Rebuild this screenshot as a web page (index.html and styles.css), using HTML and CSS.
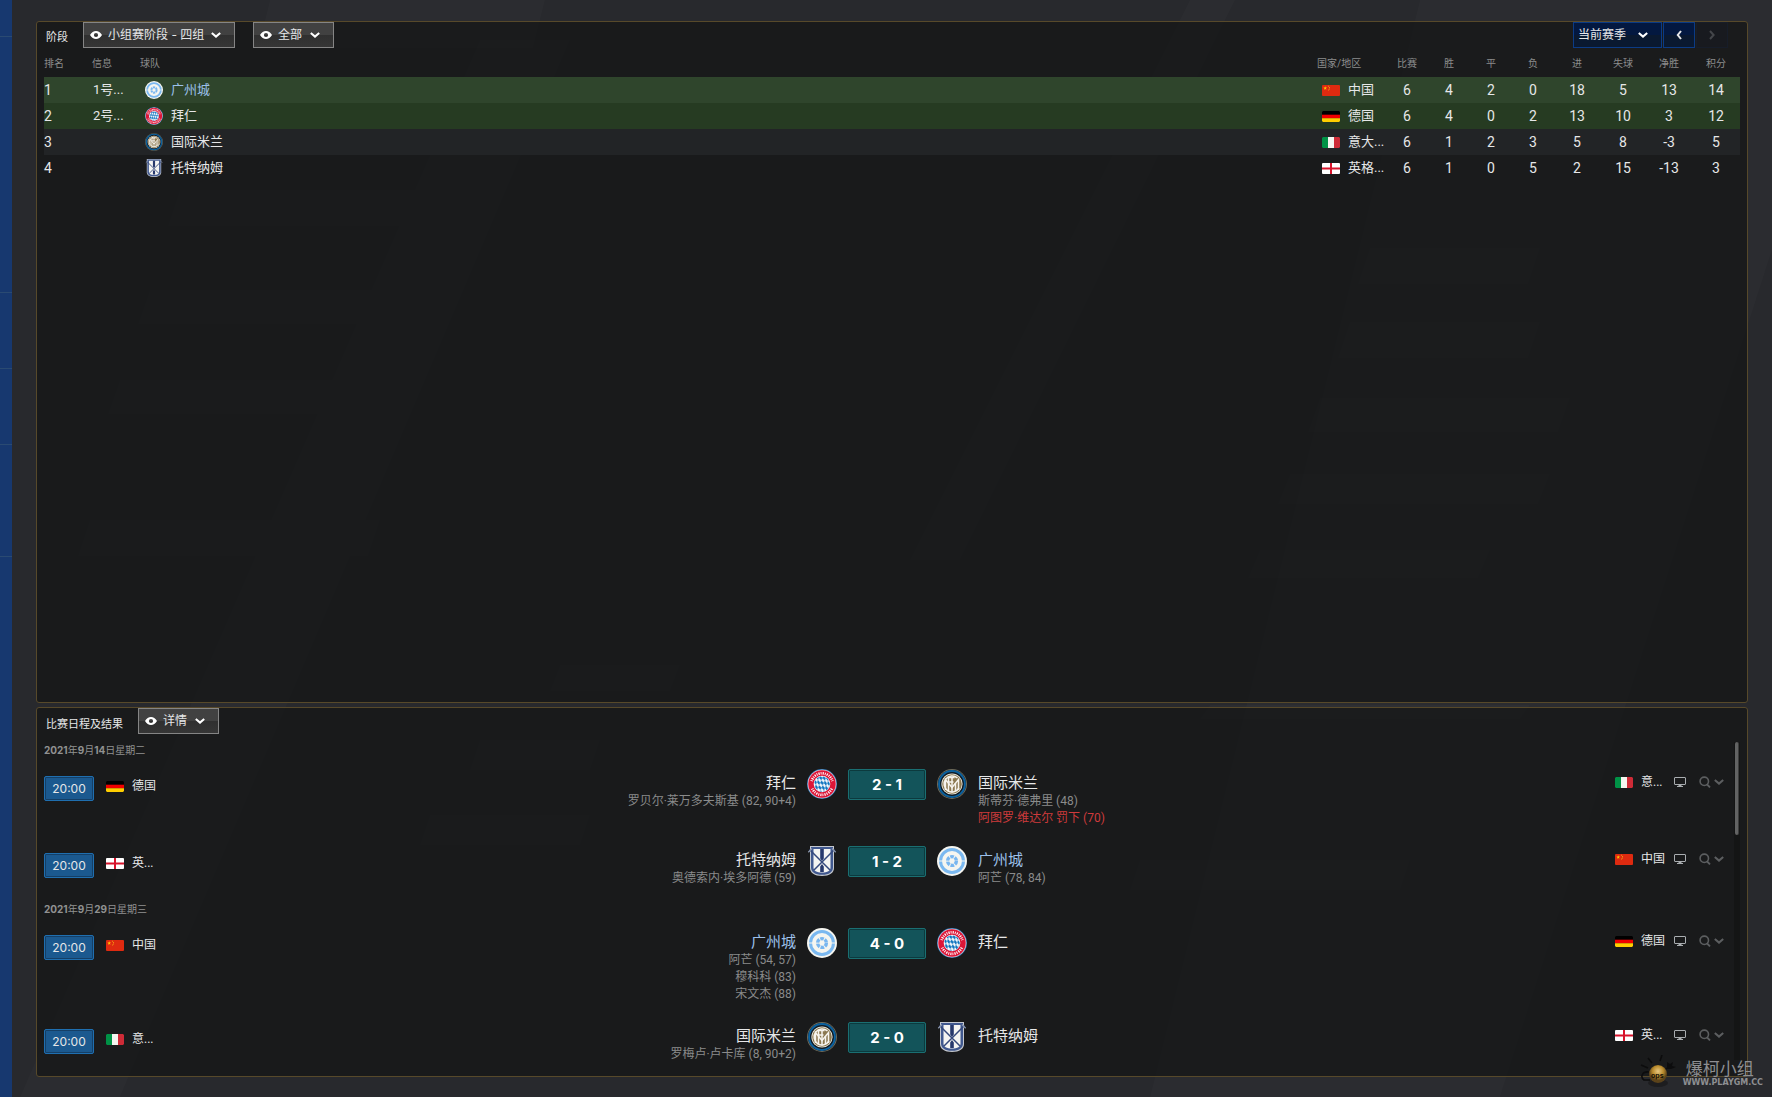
FILE: index.html
```
<!DOCTYPE html>
<html lang="zh-CN">

<head>
	<meta charset="UTF-8">
	<meta name="viewport" content="width=device-width, initial-scale=1.0">
	<title>小组赛阶段 - 四组</title>
	<link rel="stylesheet" href="styles.css">
</head>

<body>
	<!-- shared icons -->
	<svg class="sprite" aria-hidden="true">
		<defs>
			<pattern id="lozenge" width="3.200" height="5.200" patternUnits="userSpaceOnUse" patternTransform="rotate(-14) skewY(20)">
				<path fill="#0f74c0" d="M1.600 0l1.600 2.600-1.600 2.600L0 2.600z" />
			</pattern>
		</defs>
		<symbol id="eye" viewBox="0 0 12 8">
			<path fill="#fff" fill-rule="evenodd" d="M0 4C1.6 1.2 3.6 0 6 0s4.400 1.200 6 4c-1.600 2.800-3.600 4-6 4S1.600 6.800 0 4zM6 1.900a2.100 2.100 0 1 0 0 4.200a2.100 2.100 0 1 0 0-4.200z" />
		</symbol>
		<symbol id="down" viewBox="0 0 10 6">
			<path fill="none" stroke="currentColor" stroke-width="2" d="M.8 .9L5 4.600L9.200 .9" />
		</symbol>
		<symbol id="left" viewBox="0 0 6 10">
			<path fill="none" stroke="currentColor" stroke-width="2" d="M5 1L1.800 5L5 9" />
		</symbol>
		<symbol id="right" viewBox="0 0 6 10">
			<path fill="none" stroke="currentColor" stroke-width="2" d="M1 1L4.600 5L1 9" />
		</symbol>
		<symbol id="screen" viewBox="0 0 12 10">
			<rect x=".5" y=".5" width="11" height="7" rx=".5" fill="none" stroke="#a9adb0" />
			<path fill="#a9adb0" d="M4.500 8h3v1H9v1H3V9h1.500z" />
		</symbol>
		<symbol id="search" viewBox="0 0 12 12">
			<circle cx="5.300" cy="5.300" r="4.200" fill="none" stroke="#5c5e60" stroke-width="1.600" />
			<path d="M7.800 8.200L11 11.400" stroke="#5c5e60" stroke-width="1.900" />
		</symbol>

		<symbol id="cn" viewBox="0 0 18 11">
			<rect width="18" height="11" rx="1" fill="#de2a10" />
			<path fill="#ffc800" d="M3.200 1.200l.5 1.300h1.400l-1.100.8.4 1.400-1.200-.8-1.200.8.4-1.400-1.100-.8h1.400z" />
			<path fill="#f09010" d="M6 .8h1v1H6zM7 2h1v1H7zM7 3.500h1v1H7zM6 4.600h1v.8H6z" />
		</symbol>
		<symbol id="de" viewBox="0 0 18 11">
			<path fill="#000" d="M1 0h16l1 1v3H0V1z" />
			<path fill="#f00000" d="M0 3.700h18v3.600H0z" />
			<path fill="#ffce00" d="M0 7.300h18V10l-1 1H1l-1-1z" />
		</symbol>
		<symbol id="it" viewBox="0 0 18 11">
			<path fill="#009246" d="M1 0h5v11H1l-1-1V1z" />
			<path fill="#f4f5f0" d="M6 0h6v11H6z" />
			<path fill="#ce2b37" d="M12 0h5l1 1v9l-1 1h-5z" />
		</symbol>
		<symbol id="en" viewBox="0 0 18 11">
			<rect width="18" height="11" rx="1" fill="#fff" />
			<path fill="#d8142c" d="M8 0h2v4.500h8v2h-8V11H8V6.500H0v-2h8z" />
		</symbol>

		<symbol id="gz" viewBox="0 0 30 30">
			<circle cx="15" cy="15" r="15" fill="#f5f5f0" />
			<circle cx="15" cy="15" r="11.500" fill="none" stroke="#7ab8f0" stroke-width="3" />
			<path stroke="#f5f5f0" stroke-width="1.200" d="M1 15h4M25 15h4" />
			<circle cx="15" cy="15" r="4.400" fill="none" stroke="#78b6f0" stroke-width="3.400" stroke-dasharray="3.600 1.008" />
		</symbol>
		<symbol id="bay" viewBox="0 0 30 30">
			<circle cx="15" cy="15" r="15" fill="#3178b4" />
			<circle cx="15" cy="15" r="14.300" fill="#f1dfe3" />
			<circle cx="15" cy="15" r="13.700" fill="#dc1638" />
			<circle cx="15" cy="15" r="8.300" fill="#f4f8fb" />
			<circle cx="15" cy="15" r="7.800" fill="url(#lozenge)" />
			<!-- lettering round the ring, reduced to strokes -->
			<g fill="none" stroke="#fff" stroke-width="2.600" stroke-dasharray=".9 1.100 1.200 1">
				<path d="M4.600 12.200A10.800 10.800 0 0 1 25.400 12.200" />
				<path d="M5.200 19.600A10.800 10.800 0 0 0 24.800 19.600" />
			</g>
		</symbol>
		<symbol id="int" viewBox="0 0 30 30">
			<circle cx="15" cy="15" r="15" fill="#6d6a5a" />
			<circle cx="15" cy="15" r="14" fill="#0f1a22" />
			<circle cx="15" cy="15" r="12.900" fill="none" stroke="#0c62a0" stroke-width="2" />
			<circle cx="15" cy="15" r="10.600" fill="#f0eee6" />
			<circle cx="15" cy="15" r="9.800" fill="#8b7850" />
			<g fill="none" stroke="#f6f4ee" stroke-width="1.500">
				<path d="M8.500 21V10.500L15 18.500L21.500 10.500V21" />
				<path d="M11.500 23V8.500h6M11.500 13h5" />
				<path d="M20.500 9A8 8 0 1 0 22 19" />
				<path d="M15 8v15.500M18.500 14v8.500" />
			</g>
		</symbol>
		<symbol id="tot" viewBox="0 0 30 30">
			<path fill="#c4c8cf" d="M3 0h24v22c0 4.800-4.500 8-12 8S3 26.800 3 22z" />
			<path fill="#40588f" d="M4 1h22v20.500c0 4.500-4 7.300-11 7.300S4 26 4 21.500z" />
			<path fill="#f4f4f2" d="M6.500 3h17v18.500c0 3.300-3 5.100-8.500 5.100s-8.500-1.800-8.500-5.100z" />
			<path fill="#26386c" d="M13.200 3h3.600v9.500L15 15l-1.800-2.500zM13.200 20.500L15 18l1.800 2.500V26h-3.600z" />
			<path stroke="#34487c" stroke-width="1.500" d="M2.500 3.500L23 24M27.500 3.500L7 24" />
			<path stroke="#8c98b0" stroke-width="1.300" d="M1.300 6.200L5 2.500M28.700 6.200L25 2.500" />
		</symbol>
	</svg>

	<!-- faint slanted shapes behind the panels -->
	<svg class="backdrop" viewBox="0 0 1772 1097" preserveAspectRatio="none" aria-hidden="true">
		<path d="M270 0h275l-12 48H258zM1190 0h45L960 560h-50zM1420 0h352v250L1500 1097h-350z" />
		<path d="M480 40h90L120 1097H20zM180 190h300l-12 36H168zM150 290h290l-12 34H138zM120 380h260l-12 34H108zM90 520h290l-12 36H78z" />
		<path d="M1370 248h170l-12 36h-170zM1350 322h190l-12 36h-190zM1320 398h250l-12 34h-250zM1290 474h260l-12 30h-260zM1260 550h230l-12 28h-230z" />
		<path d="M560 665h120l-10 26H550zM480 740h120l-10 30H470zM430 815h160l-10 30H420zM1140 860h270l-10 30h-270zM1210 705h320l-10 14h-320z" />
	</svg>

	<div class="rail">
		<i></i><i></i><i></i><i></i><i></i>
	</div>

	<main class="content">
		<section class="panel stage">
			<div class="toolbar">
				<label for="stage" class="title">阶段</label>
				<div class="dropdown wide">
					<svg class="eye"><use href="#eye" /></svg>
					<select id="stage"><option>小组赛阶段 - 四组</option></select>
					<svg class="arrow"><use href="#down" /></svg>
				</div>
				<div class="dropdown">
					<svg class="eye"><use href="#eye" /></svg>
					<select aria-label="显示"><option>全部</option></select>
					<svg class="arrow"><use href="#down" /></svg>
				</div>
				<div class="season">
					<div class="dropdown blue">
						<select aria-label="赛季"><option>当前赛季</option></select>
						<svg class="arrow"><use href="#down" /></svg>
					</div>
					<button class="step" aria-label="上一赛季"><svg><use href="#left" /></svg></button>
					<button class="step" aria-label="下一赛季" disabled><svg><use href="#right" /></svg></button>
				</div>
			</div>

			<table class="standings">
				<colgroup>
					<col class="colRank"><col class="colRank"><col>
					<col class="colNation">
					<col class="colNum"><col class="colNum"><col class="colNum"><col class="colNum">
					<col class="colGoals"><col class="colGoals"><col class="colGoals"><col class="colPoints">
				</colgroup>
				<thead>
					<tr>
						<th>排名</th><th>信息</th><th>球队</th><th>国家/地区</th>
						<th class="num">比赛</th><th class="num">胜</th><th class="num">平</th><th class="num">负</th>
						<th class="num">进</th><th class="num">失球</th><th class="num">净胜</th><th class="num">积分</th>
					</tr>
				</thead>
				<tbody>
					<tr class="first">
						<td>1</td><td class="info">1号...</td>
						<td><div class="team own"><svg class="badge"><use href="#gz" /></svg>广州城</div></td>
						<td><div class="nation"><svg class="flag"><use href="#cn" /></svg>中国</div></td>
						<td class="num">6</td><td class="num">4</td><td class="num">2</td><td class="num">0</td>
						<td class="num">18</td><td class="num">5</td><td class="num">13</td><td class="num">14</td>
					</tr>
					<tr class="second">
						<td>2</td><td class="info">2号...</td>
						<td><div class="team"><svg class="badge"><use href="#bay" /></svg>拜仁</div></td>
						<td><div class="nation"><svg class="flag"><use href="#de" /></svg>德国</div></td>
						<td class="num">6</td><td class="num">4</td><td class="num">0</td><td class="num">2</td>
						<td class="num">13</td><td class="num">10</td><td class="num">3</td><td class="num">12</td>
					</tr>
					<tr class="odd">
						<td>3</td><td></td>
						<td><div class="team"><svg class="badge"><use href="#int" /></svg>国际米兰</div></td>
						<td><div class="nation"><svg class="flag"><use href="#it" /></svg>意大...</div></td>
						<td class="num">6</td><td class="num">1</td><td class="num">2</td><td class="num">3</td>
						<td class="num">5</td><td class="num">8</td><td class="num">-3</td><td class="num">5</td>
					</tr>
					<tr>
						<td>4</td><td></td>
						<td><div class="team"><svg class="badge"><use href="#tot" /></svg>托特纳姆</div></td>
						<td><div class="nation"><svg class="flag"><use href="#en" /></svg>英格...</div></td>
						<td class="num">6</td><td class="num">1</td><td class="num">0</td><td class="num">5</td>
						<td class="num">2</td><td class="num">15</td><td class="num">-13</td><td class="num">3</td>
					</tr>
				</tbody>
			</table>
		</section>

		<section class="panel fixtures">
			<div class="toolbar">
				<label for="view" class="title">比赛日程及结果</label>
				<div class="dropdown">
					<svg class="eye"><use href="#eye" /></svg>
					<select id="view"><option>详情</option></select>
					<svg class="arrow"><use href="#down" /></svg>
				</div>
			</div>

			<div class="scroller">
				<div class="list">
					<h2 class="date"><b>2021</b>年<b>9</b>月<b>14</b>日星期二</h2>
					<div class="match">
						<div class="venue">
							<button class="time">20:00</button>
							<svg class="flag"><use href="#de" /></svg><span>德国</span>
						</div>
						<div class="side home">
							<div class="name">拜仁</div>
							<div class="scorer">罗贝尔·莱万多夫斯基 (82, 90+4)</div>
						</div>
						<div class="result">
							<svg class="crest"><use href="#bay" /></svg>
							<button class="score">2 - 1</button>
							<svg class="crest"><use href="#int" /></svg>
						</div>
						<div class="side">
							<div class="name">国际米兰</div>
							<div class="scorer">斯蒂芬·德弗里 (48)</div>
							<div class="scorer red">阿图罗·维达尔 罚下 (70)</div>
						</div>
						<div class="tools">
							<svg class="flag"><use href="#it" /></svg><span>意...</span>
							<svg class="screen"><use href="#screen" /></svg>
							<button class="more" aria-label="更多"><svg class="search"><use href="#search" /></svg><svg class="arrow"><use href="#down" /></svg></button>
						</div>
					</div>
					<div class="match">
						<div class="venue">
							<button class="time">20:00</button>
							<svg class="flag"><use href="#en" /></svg><span>英...</span>
						</div>
						<div class="side home">
							<div class="name">托特纳姆</div>
							<div class="scorer">奥德索内·埃多阿德 (59)</div>
						</div>
						<div class="result">
							<svg class="crest"><use href="#tot" /></svg>
							<button class="score">1 - 2</button>
							<svg class="crest"><use href="#gz" /></svg>
						</div>
						<div class="side">
							<div class="name own">广州城</div>
							<div class="scorer">阿芒 (78, 84)</div>
						</div>
						<div class="tools">
							<svg class="flag"><use href="#cn" /></svg><span>中国</span>
							<svg class="screen"><use href="#screen" /></svg>
							<button class="more" aria-label="更多"><svg class="search"><use href="#search" /></svg><svg class="arrow"><use href="#down" /></svg></button>
						</div>
					</div>

					<h2 class="date"><b>2021</b>年<b>9</b>月<b>29</b>日星期三</h2>
					<div class="match">
						<div class="venue">
							<button class="time">20:00</button>
							<svg class="flag"><use href="#cn" /></svg><span>中国</span>
						</div>
						<div class="side home">
							<div class="name own">广州城</div>
							<div class="scorer">阿芒 (54, 57)</div>
							<div class="scorer">穆科科 (83)</div>
							<div class="scorer">宋文杰 (88)</div>
						</div>
						<div class="result">
							<svg class="crest"><use href="#gz" /></svg>
							<button class="score">4 - 0</button>
							<svg class="crest"><use href="#bay" /></svg>
						</div>
						<div class="side">
							<div class="name">拜仁</div>
						</div>
						<div class="tools">
							<svg class="flag"><use href="#de" /></svg><span>德国</span>
							<svg class="screen"><use href="#screen" /></svg>
							<button class="more" aria-label="更多"><svg class="search"><use href="#search" /></svg><svg class="arrow"><use href="#down" /></svg></button>
						</div>
					</div>
					<div class="match">
						<div class="venue">
							<button class="time">20:00</button>
							<svg class="flag"><use href="#it" /></svg><span>意...</span>
						</div>
						<div class="side home">
							<div class="name">国际米兰</div>
							<div class="scorer">罗梅卢·卢卡库 (8, 90+2)</div>
						</div>
						<div class="result">
							<svg class="crest"><use href="#int" /></svg>
							<button class="score">2 - 0</button>
							<svg class="crest"><use href="#tot" /></svg>
						</div>
						<div class="side">
							<div class="name">托特纳姆</div>
						</div>
						<div class="tools">
							<svg class="flag"><use href="#en" /></svg><span>英...</span>
							<svg class="screen"><use href="#screen" /></svg>
							<button class="more" aria-label="更多"><svg class="search"><use href="#search" /></svg><svg class="arrow"><use href="#down" /></svg></button>
						</div>
					</div>
				</div>
				<div class="track"><div class="thumb"></div></div>
			</div>
		</section>
	</main>

	<div class="watermark">
		<svg class="bomb" viewBox="0 0 36 34" aria-hidden="true">
			<defs>
				<radialGradient id="gold" cx=".5" cy=".35">
					<stop offset="0" stop-color="#e8c880" />
					<stop offset=".6" stop-color="#b88a2c" />
					<stop offset="1" stop-color="#5c431a" />
				</radialGradient>
			</defs>
			<path fill="none" stroke="#0c0c0d" stroke-width="1.600" d="M12 8L8 3M20 6L22 0M8 13L1 10M9 17C2 16 0 22 4 25h6M26 14l5-4" />
			<path fill="#0c0c0d" d="M27 7l3 2 3-2-1 4 4 1-5 2-4 0z" />
			<ellipse cx="18" cy="28" rx="10" ry="4" fill="#111" opacity=".5" />
			<circle cx="18" cy="19" r="9" fill="url(#gold)" />
			<text x="11" y="23">ops</text>
		</svg>
		<div class="mark">
			<div class="markName">爆柯小组</div>
			<div class="markSite">WWW.PLAYGM.CC</div>
		</div>
	</div>
</body>

</html>
```
FILE: styles.css
```
body {
	margin: 0;
	min-height: 100vh;
	display: flex;
	background-color: #28292d;
	color: #e6e7e8;
	font: 12px/16px Inter, "Noto Sans CJK SC", sans-serif;
}

select,
button {
	margin: 0;
	padding: 0;
	color: inherit;
	font: inherit;
	cursor: pointer;
}

svg {
	display: block;
	flex: none;
}

.sprite {
	position: absolute;
	width: 0;
	height: 0;
}

.backdrop {
	position: absolute;
	z-index: -1;
	width: 100%;
	height: 100%;
	fill: #fff;
	fill-opacity: 0.016;
}

/* edge of the collapsed side menu */
.rail {
	flex: 0 0 12px;
	background-color: #17386f;
}

.rail i {
	display: block;
	height: 75px;
	border-bottom: 1px solid #2a4a72;
}

.rail i:first-child {
	height: 36px;
}

.rail i:nth-child(2) {
	height: 255px;
}

.rail i:last-child {
	height: 111px;
}

.content {
	flex: 1;
	min-width: 0;
	display: flex;
	flex-direction: column;
	gap: 4px;
	padding: 21px 24px 20px;
}

.panel {
	padding: 0 7px;
	border: 1px solid #57492a;
	border-radius: 3px;
	background-color: rgba(17, 18, 19, 0.65);
}

.stage {
	flex: 1;
}

.toolbar {
	display: flex;
	align-items: flex-start;
	height: 29px;
}

.fixtures .toolbar {
	height: 31px;
}

.title {
	align-self: center;
	margin: 0 15px 0 2px;
	font-size: 11px;
}

.dropdown {
	position: relative;
	width: 81px;
	height: 26px;
	margin-right: 18px;
}

.dropdown.wide {
	width: 152px;
}

.dropdown select {
	width: 100%;
	height: 100%;
	padding: 0 0 1px 24px;
	appearance: none;
	border: 1px solid #858585;
	border-radius: 0;
	background: linear-gradient(#414141 50%, #303030 50%, #363636);
}

.dropdown .eye {
	position: absolute;
	top: 9px;
	left: 7px;
	width: 12px;
	height: 8px;
}

.arrow {
	width: 10px;
	height: 6px;
}

.dropdown .arrow {
	position: absolute;
	top: 10px;
	right: 14px;
	color: #fff;
	pointer-events: none;
}

.season {
	display: flex;
	gap: 1px;
	margin-left: auto;
	margin-right: 12px;
}

.dropdown.blue {
	width: 89px;
	margin-right: 0;
}

.dropdown.blue select {
	padding-left: 4px;
	border-color: #0b3b85;
	background: linear-gradient(#031840 50%, #0a1930 50%);
}

.step {
	display: flex;
	align-items: center;
	justify-content: center;
	width: 32px;
	height: 26px;
	border: 1px solid #0b3b85;
	background: linear-gradient(#031840 50%, #0a1930 50%);
}

.step svg {
	width: 6px;
	height: 10px;
}

.step:disabled {
	border-color: #171d29;
	background: #181a1f;
	color: #44464a;
	cursor: default;
}

.standings {
	width: 100%;
	table-layout: fixed;
	border-collapse: collapse;
	font: 13px/26px Roboto, "Noto Sans CJK SC", sans-serif;
}

.colRank {
	width: 48px;
}

.colNation {
	width: 69px;
}

.colNum {
	width: 42px;
}

.colGoals {
	width: 46px;
}

.colPoints {
	width: 48px;
}

.standings th,
.standings td {
	height: 26px;
	padding: 0;
	text-align: left;
	white-space: nowrap;
}

.standings th {
	color: #8b8c8c;
	font-size: 10px;
	font-weight: normal;
}

.standings td {
	font-size: 14px;
}

.standings .info {
	padding-left: 1px;
	font-size: 13px;
}

.standings .num {
	text-align: center;
}

.team,
.nation {
	display: flex;
	align-items: center;
	gap: 8px;
	padding-left: 5px;
	font-size: 13px;
}

.first {
	background-color: #2f452c;
}

.second {
	background-color: #263b22;
}

.odd {
	background-color: #222426;
}

.own {
	color: #9cc0ea;
}

.badge {
	width: 18px;
	height: 18px;
}

.flag {
	width: 18px;
	height: 11px;
}

.scroller {
	display: flex;
	gap: 4px;
	padding-bottom: 2px;
}

.list {
	flex: 1;
	min-width: 0;
}

.track {
	width: 6px;
	margin: 3px 0 14px;
	background-color: #141515;
}

.thumb {
	width: 3px;
	height: 93px;
	margin-left: 1px;
	border-right: 1px solid #3c3d3d;
	border-radius: 2px;
	background-color: #626363;
}

.date {
	margin: 0;
	color: #909191;
	font-size: 10px;
	font-weight: normal;
	line-height: 22px;
}

.match {
	display: grid;
	grid-template-columns: 150px 1fr auto 1fr 150px;
	align-items: start;
	column-gap: 11px;
	padding: 8px 0 11px;
}

.venue,
.tools {
	display: flex;
	align-items: center;
}

.venue {
	align-items: flex-start;
	padding-top: 7px;
}

.venue .flag {
	margin: 5px 8px 0 12px;
}

.venue span {
	margin-top: 2px;
}

.venue span,
.tools span {
	font-family: Roboto, "Noto Sans CJK SC", sans-serif;
}

.time {
	width: 50px;
	height: 25px;
	border: 1px solid #1f6fb0;
	border-radius: 2px;
	background-color: #1b598f;
	box-shadow: inset 0 0 0 1px #153f66;
}

.side {
	min-width: 0;
	padding-top: 4px;
}

.home {
	text-align: right;
}

.name {
	font-size: 15px;
	line-height: 20px;
}

.scorer {
	color: #8a8b8b;
	font-family: Roboto, "Noto Sans CJK SC", sans-serif;
	line-height: 17px;
}

.red {
	color: #cf3a3c;
}

.result {
	display: flex;
	gap: 11px;
}

.crest {
	width: 30px;
	height: 30px;
}

.score {
	width: 78px;
	height: 31px;
	border: 1px solid #1a6f72;
	border-radius: 2px;
	background-color: #13545a;
	box-shadow: inset 0 0 0 1px #0c3a3e;
	color: #fff;
	font-size: 15px;
	font-weight: bold;
}

.tools {
	justify-content: flex-end;
	padding: 5px 6px 0 0;
}

.tools span {
	width: 25px;
	margin: 0 8px;
}

.screen {
	width: 12px;
	height: 10px;
}

.more {
	display: flex;
	align-items: center;
	gap: 3px;
	margin-left: 13px;
	border: none;
	background: none;
	color: #5c5e60;
}

.search {
	width: 12px;
	height: 12px;
}

.watermark {
	position: absolute;
	right: 9px;
	bottom: 8px;
	display: flex;
	align-items: flex-end;
	gap: 7px;
	color: #8e8f92;
}

.bomb {
	width: 36px;
	height: 34px;
}

.bomb text {
	fill: #151008;
	font: bold 7px Inter, sans-serif;
}

.markName {
	font: 17px/18px "Noto Sans CJK SC", sans-serif;
	padding-left: 3px;
}

.markSite {
	font: bold 8px/12px "DejaVu Sans", sans-serif;
}
```
